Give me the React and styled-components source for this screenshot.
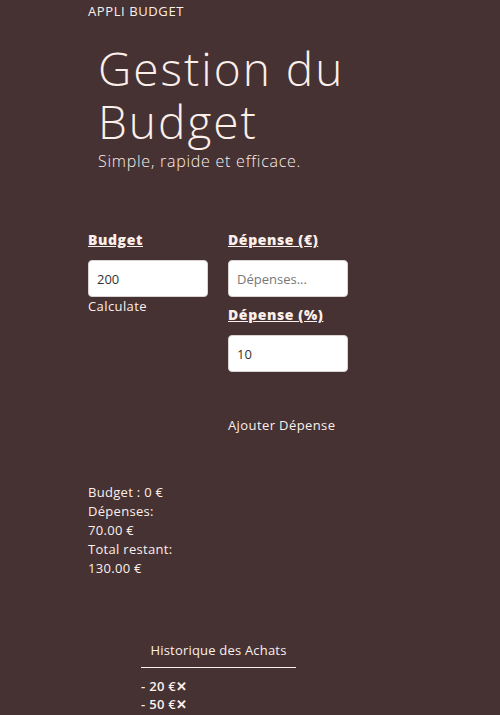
import React from "react";
import styled, { createGlobalStyle } from "styled-components";

const Global = createGlobalStyle`
  html, body { margin: 0; padding: 0; background: #463133; }
  body { font-family: "Open Sans", "Liberation Sans", sans-serif; color: #fbefea; }
  * { box-sizing: border-box; }
`;

const Page = styled.div`
  width: 500px;
  min-height: 715px;
  padding: 2px 0 0 88px;
`;

const Brand = styled.div`
  font-size: 13px;
  letter-spacing: 0.6px;
  text-transform: uppercase;
  line-height: 18px;
`;

const Hero = styled.header`
  padding: 22px 0 0 10px;
  width: 280px;
`;

const Title = styled.h1`
  margin: 0;
  font-weight: 300;
  font-size: 46px;
  line-height: 53px;
  letter-spacing: 2px;
`;

const Subtitle = styled.p`
  margin: 3px 0 0;
  font-size: 16px;
  line-height: 20px;
  font-weight: 300;
  letter-spacing: 0.75px;
`;

const Form = styled.section`
  display: grid;
  grid-template-columns: 120px 120px;
  column-gap: 20px;
  margin-top: 59px;
`;

const Col = styled.div`
  display: flex;
  flex-direction: column;
  align-items: flex-start;
`;

const Label = styled.label`
  font-size: 14px;
  font-weight: 800;
  text-decoration: underline;
  line-height: 20px;
  letter-spacing: 0.6px;
  margin-bottom: 10px;
`;

const Input = styled.input`
  width: 120px;
  height: 37px;
  border: 1px solid #d9d3d3;
  border-radius: 4px;
  background: #fff;
  padding: 0 8px;
  font-family: inherit;
  font-size: 13px;
  color: #333;
  margin-bottom: ${(p) => p.$mb || 0}px;
  &::placeholder { color: #777; }
`;

const TextButton = styled.button`
  background: none;
  border: none;
  padding: 0;
  color: inherit;
  font-family: inherit;
  font-size: 13px;
  line-height: 18px;
  letter-spacing: 0.4px;
  margin-top: ${(p) => p.$mt || 0}px;
  cursor: pointer;
`;

const Summary = styled.div`
  width: 92px;
  margin-top: 49px;
  font-size: 13px;
  line-height: 19px;
  letter-spacing: 0.3px;
`;

const History = styled.section`
  margin: 63px 0 0 53px;
  width: 155px;
`;

const HistoryTitle = styled.h2`
  margin: 0;
  font-size: 13px;
  font-weight: 400;
  text-align: center;
  line-height: 18px;
  letter-spacing: 0.2px;
  padding-bottom: 8px;
  border-bottom: 1px solid #fbefea;
`;

const List = styled.ul`
  list-style: none;
  margin: 9px 0 0;
  padding: 0;
`;

const Item = styled.li`
  font-size: 13px;
  line-height: 18px;
  font-weight: 600;
  letter-spacing: 0.3px;
`;

export default function App() {
  return (
    <>
      <Global />
      <Page>
        <Brand>Appli Budget</Brand>
        <Hero>
          <Title>Gestion du Budget</Title>
          <Subtitle>Simple, rapide et efficace.</Subtitle>
        </Hero>
        <Form>
          <Col>
            <Label>Budget</Label>
            <Input defaultValue="200" />
            <TextButton>Calculate</TextButton>
          </Col>
          <Col>
            <Label>Dépense (€)</Label>
            <Input placeholder="Dépenses..." $mb={8} />
            <Label>Dépense (%)</Label>
            <Input defaultValue="10" />
            <TextButton $mt={44}>Ajouter Dépense</TextButton>
          </Col>
        </Form>
        <Summary>
          Budget : 0 €<br />
          Dépenses: 70.00 €<br />
          Total restant: 130.00 €
        </Summary>
        <History>
          <HistoryTitle>Historique des Achats</HistoryTitle>
          <List>
            <Item>- 20 €✕</Item>
            <Item>- 50 €✕</Item>
          </List>
        </History>
      </Page>
    </>
  );
}
